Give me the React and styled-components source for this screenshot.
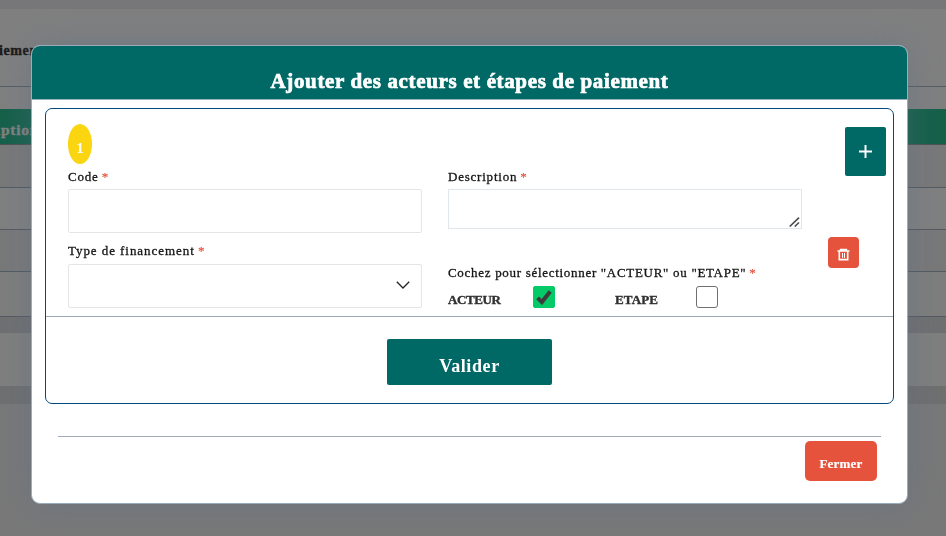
import React from "react";
import styled, { createGlobalStyle } from "styled-components";

const Global = createGlobalStyle`
  *, *::before, *::after { box-sizing: border-box; }
  html, body { margin: 0; height: 100%; overflow: hidden; }
  body { background: #f0f0f1; color: #151515; font-family: "Liberation Serif", "Times New Roman", serif; font-size: 14px; }
  button, input, textarea { font-family: inherit; }
`;

const Page = styled.div`
  height: 536px;
  display: flex;
  flex-direction: column;
  overflow: hidden;
`;

const Band = styled.div`
  flex: none;
  height: ${(p) => p.$h}px;
  background: ${(p) => p.$bg};
  border-bottom: ${(p) => (p.$line ? `1px solid ${p.$line}` : "0")};
  display: flex;
  align-items: center;
  white-space: nowrap;
`;

const PageTitle = styled.b`
  font-size: 14px;
  line-height: 16px;
  letter-spacing: 0.6px;
  margin-left: -1px;
  padding-top: 6px;
  color: #333;
  -webkit-text-stroke: 0.4px #333;
`;

const ColumnTitle = styled.b`
  font-size: 15.5px;
  letter-spacing: 0.7px;
  margin-left: -4px;
  padding-top: 7px;
  color: #fff;
  -webkit-text-stroke: 0.4px #fff;
`;

const Backdrop = styled.div`
  position: fixed;
  inset: 0;
  background: rgba(0, 0, 0, 0.5);
  display: flex;
  align-items: flex-start;
  padding: 45px 38px 0 31px;
`;

const Dialog = styled.section`
  width: 877px;
  height: 459px;
  background: #fff;
  border: 1px solid #9aabb9;
  border-radius: 9px;
  overflow: hidden;
  box-shadow: 0 0 34px rgba(90, 112, 138, 0.42);
  display: flex;
  flex-direction: column;
`;

const Header = styled.header`
  height: 54px;
  flex: none;
  background: #006865;
  border-bottom: 1px solid #9ab3b9;
  display: flex;
  justify-content: center;
  padding-top: 22px;
`;

const Title = styled.h1`
  margin: 0;
  color: #fff;
  font-size: 21px;
  line-height: 26px;
  font-weight: 700;
  letter-spacing: ${(p) => p.$ls || 0}px;
  -webkit-text-stroke: 0.7px #fff;
  white-space: nowrap;
`;

const Panel = styled.div`
  flex: none;
  height: 296px;
  margin: 8px 13px 0;
  border: 1px solid #00487e;
  border-radius: 7px;
  display: flex;
  flex-direction: column;
`;

const Entry = styled.div`
  height: 208px;
  border-bottom: 1px solid #9aa9b8;
  padding: 15px 7px 0 22px;
  display: flex;
`;

const Fields = styled.div`
  width: 734px;
  flex: none;
`;

const Columns = styled.div`
  display: grid;
  grid-template-columns: 354px 354px;
  column-gap: 26px;
`;

const Side = styled.div`
  flex: 1;
  display: flex;
  flex-direction: column;
  align-items: flex-end;
  padding-top: 3px;
`;

const Badge = styled.div`
  width: 24px;
  height: 40px;
  border-radius: 50%;
  background: #fad510;
  color: #fff;
  font-size: 15px;
  font-weight: 700;
  line-height: 20px;
  text-align: center;
  padding-top: 14px;
`;

const Label = styled.label`
  display: block;
  height: ${(p) => p.$h || 25}px;
  padding-top: ${(p) => p.$top || 5}px;
  font-size: 13px;
  line-height: 16px;
  letter-spacing: ${(p) => p.$ls || 0}px;
  -webkit-text-stroke: 0.3px #151515;
  white-space: nowrap;
`;

const Star = styled.span`
  color: #e5533d;
  letter-spacing: 0;
  margin-left: -1px;
  -webkit-text-stroke: 0.2px #e5533d;
`;

const Input = styled.input`
  display: block;
  width: 100%;
  height: 44px;
  border: 1px solid #e3e5e7;
  border-radius: 2px;
  outline: none;
`;

const Area = styled.div`
  height: 40px;
  border: 1px solid #e1e6ea;
  display: flex;
  align-items: flex-end;
  justify-content: flex-end;
  padding: 0 1px 1px 0;
`;

const Select = styled.div`
  height: 44px;
  border: 1px solid #e3e5e7;
  border-radius: 2px;
  display: flex;
  align-items: center;
  justify-content: flex-end;
  padding: 0 11px 2px 0;
`;

const Choices = styled.div`
  display: flex;
  align-items: flex-start;
  height: 24px;
`;

const Choice = styled.b`
  width: ${(p) => p.$w}px;
  padding-top: 6px;
  font-size: 13px;
  line-height: 16px;
  letter-spacing: ${(p) => p.$ls}px;
  color: #303030;
  -webkit-text-stroke: 0.4px #303030;
`;

const Check = styled.span`
  width: 22px;
  height: 22px;
  margin-right: ${(p) => p.$mr || 0}px;
  border: 1px solid ${(p) => (p.$on ? "#04cb68" : "#707070")};
  border-radius: ${(p) => (p.$on ? 2 : 3)}px;
  background: ${(p) => (p.$on ? "#04cb68" : "#fff")};
  display: flex;
  align-items: center;
  justify-content: center;
`;

const AddButton = styled.button`
  width: 41px;
  height: 49px;
  border: 0;
  border-radius: 2px;
  padding: 0;
  background: #006865;
  display: flex;
  align-items: center;
  justify-content: center;
`;

const DeleteButton = styled.button`
  width: 31px;
  height: 31px;
  margin: 61px 27px 0 0;
  border: 0;
  border-radius: 4px;
  padding: 3px 0 0;
  background: #e5533d;
  display: flex;
  align-items: center;
  justify-content: center;
`;

const Submit = styled.button`
  align-self: center;
  width: 165px;
  height: 46px;
  margin-top: 22px;
  padding: 8px 0 0;
  border: 0;
  border-radius: 2px;
  background: #006865;
  color: #fff;
  font-size: 18px;
  line-height: 22px;
  font-weight: 700;
  letter-spacing: 0.6px;
`;

const Footer = styled.footer`
  margin: 32px 26px 0;
  border-top: 1px solid #9fabb9;
  padding: 4px 4px 0 0;
  display: flex;
  justify-content: flex-end;
`;

const Close = styled.button`
  width: 72px;
  height: 40px;
  padding: 6px 0 0;
  border: 0;
  border-radius: 5px;
  background: #e5533d;
  color: #fff;
  font-size: 13px;
  line-height: 16px;
  font-weight: 700;
  letter-spacing: 0.2px;
  -webkit-text-stroke: 0.2px #fff;
`;

const Chevron = () => (
  <svg width="14" height="8" viewBox="0 0 14 8" fill="none" stroke="#222" strokeWidth="1.3">
    <path d="M.8.8 7 7 13.2.8" />
  </svg>
);

const Grip = () => (
  <svg width="11" height="10" viewBox="0 0 11 10" fill="none" stroke="#4c4c4c" strokeWidth="1.6">
    <path d="M.7 9.5 10 .7M5.7 9.5 10 5.5" />
  </svg>
);

const Tick = () => (
  <svg width="16" height="15" viewBox="0 0 16 15" fill="none" stroke="#3c3c3c" strokeWidth="4">
    <path d="M1.6 7.9 5.9 12.1 14.2 1.4" />
  </svg>
);

const Plus = () => (
  <svg width="13" height="13" viewBox="0 0 13 13" stroke="#fff" strokeWidth="2">
    <path d="M6.5 0v13M0 6.5h13" />
  </svg>
);

const Trash = () => (
  <svg width="13" height="13" viewBox="0 0 13 13" fill="none" stroke="#fff">
    <path d="M.5 3h12M3.5 2.5v-1h6v1" strokeWidth="1.4" />
    <path d="M2.3 3v8.6h8.4V3" strokeWidth="1.6" />
    <path d="M5.5 5v4.8M7.5 5v4.8" strokeWidth="1" />
  </svg>
);

export default function App() {
  return (
    <>
      <Global />
      <Page>
        <Band $h={9} $bg="#eeeef3" />
        <Band $h={78} $bg="#fff" $line="#adb9c7"><PageTitle>iement</PageTitle></Band>
        <Band $h={22} $bg="#fff" />
        <Band $h={36} $bg="#2bbf92" $line="#99a4a4"><ColumnTitle>iption</ColumnTitle></Band>
        <Band $h={43} $bg="#f1f1f1" $line="#a7b3c2" />
        <Band $h={42} $bg="#fff" $line="#a7b3c2" />
        <Band $h={42} $bg="#f1f1f1" $line="#a7b3c2" />
        <Band $h={45} $bg="#fbfbf9" $line="#a7b3c2" />
        <Band $h={16} $bg="#dddfe1" />
        <Band $h={53} $bg="#fdfdfb" />
        <Band $h={18} $bg="#dcdedf" />
      </Page>
      <Backdrop>
        <Dialog role="dialog">
          <Header>
            <Title $ls={0.64}>Ajouter des acteurs et étapes de paiement</Title>
          </Header>
          <Panel>
            <Entry>
              <Fields>
                <Badge>1</Badge>
                <Columns>
                  <div>
                    <Label $ls={0.8}>Code <Star>*</Star></Label>
                    <Input />
                    <Label $h={31} $top={10} $ls={0.94}>Type de financement <Star>*</Star></Label>
                    <Select><Chevron /></Select>
                  </div>
                  <div>
                    <Label $ls={0.78}>Description <Star>*</Star></Label>
                    <Area><Grip /></Area>
                    <Label $h={57} $top={36} $ls={0.7}>Cochez pour sélectionner "ACTEUR" ou "ETAPE" <Star>*</Star></Label>
                    <Choices>
                      <Choice $w={85} $ls={-0.4}>ACTEUR</Choice>
                      <Check $on $mr={60}><Tick /></Check>
                      <Choice $w={81} $ls={0.15}>ETAPE</Choice>
                      <Check />
                    </Choices>
                  </div>
                </Columns>
              </Fields>
              <Side>
                <AddButton aria-label="Ajouter"><Plus /></AddButton>
                <DeleteButton aria-label="Supprimer"><Trash /></DeleteButton>
              </Side>
            </Entry>
            <Submit>Valider</Submit>
          </Panel>
          <Footer><Close>Fermer</Close></Footer>
        </Dialog>
      </Backdrop>
    </>
  );
}
